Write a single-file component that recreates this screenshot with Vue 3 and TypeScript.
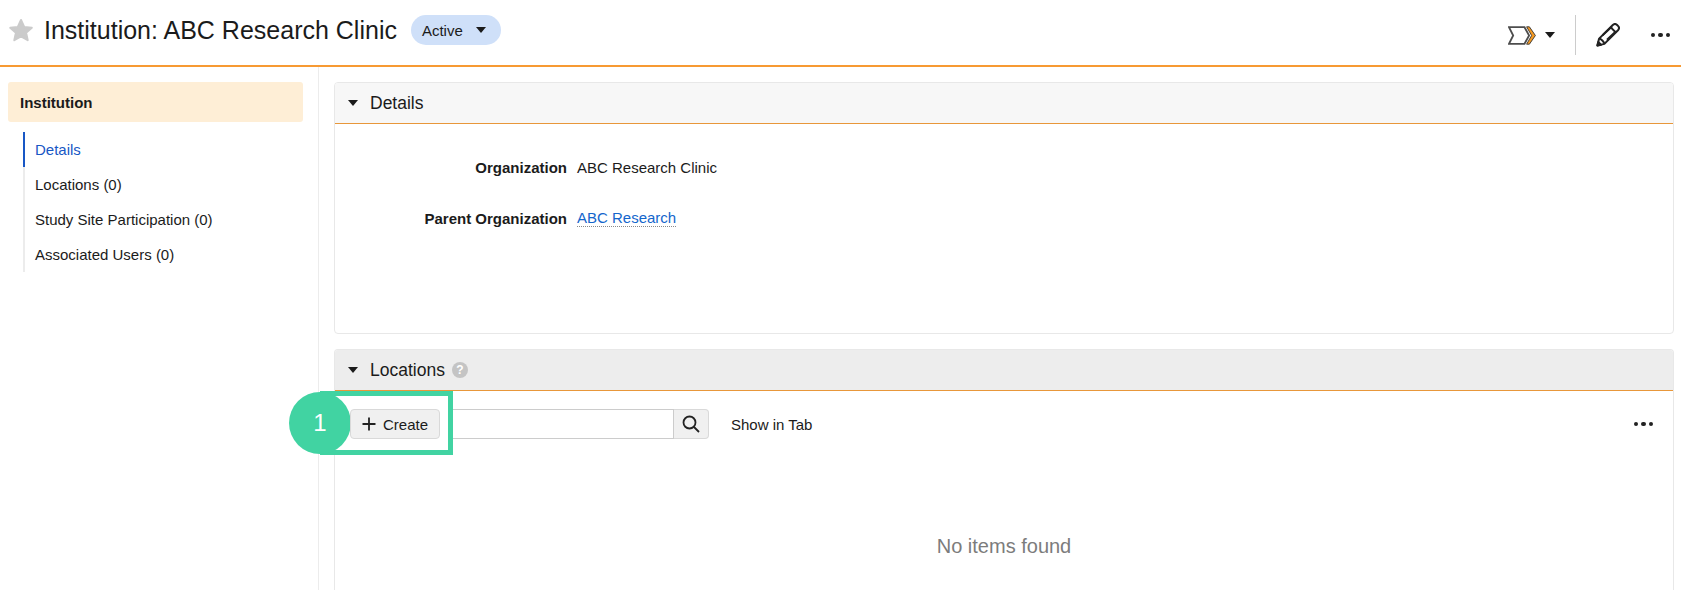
<script setup lang="ts">
const navItems: string[] = ['Locations (0)', 'Study Site Participation (0)', 'Associated Users (0)']
</script>

<template>
  <div class="page">
    <header class="top">
      <svg class="star" viewBox="0 0 26 24" width="26" height="24"><path d="M13 2l3.2 7 7.6.8-5.7 5 1.6 7.4L13 18.4l-6.7 3.8 1.6-7.4-5.7-5L9.8 9z" fill="#cbcbcb" stroke="#cbcbcb" stroke-width="2" stroke-linejoin="round" /></svg>
      <h1 class="title">Institution: ABC Research Clinic</h1>
      <div class="badge"><span>Active</span><i class="caret"></i></div>
      <div class="actions">
        <svg class="process" viewBox="0 0 28 19" width="28" height="19">
          <path d="M1 1.2h15.5l4.6 8.3-4.6 8.3H1l4.2-8.3z" fill="none" stroke="#4d4d4d" stroke-width="1.8" />
          <path d="M18.6.8h2.8l6 8.7-6 8.7h-2.8l5-8.7z" fill="#f59a23" stroke="#333" stroke-width=".9" />
        </svg>
        <i class="caret process-caret"></i>
        <span class="sep"></span>
        <svg class="pencil" viewBox="0 0 24 24" width="24" height="24" fill="none" stroke="#222" stroke-width="2" stroke-linejoin="round">
          <path d="M1.4 22.6l1.7-7L16.8 2c1.3-1.2 3.1-1.2 4.3 0l.9.9c1.2 1.2 1.2 3 0 4.3L8.4 20.9z" />
          <path d="M3.1 15.6c2 .2 4.9 3 5.3 5.3M6.6 12.2l9.4-8.6M15 4.6l4.4 4.4M11 16.8l9-8.6" />
          <path d="M1.4 22.6l.9-3.6 2.7 2.7z" fill="#222" />
        </svg>
        <div class="dots"><b></b><b></b><b></b></div>
      </div>
    </header>

    <div class="main">
      <aside class="side">
        <div class="side-head">Institution</div>
        <nav class="nav">
          <a class="nav-item active">Details</a>
          <a v-for="item in navItems" :key="item" class="nav-item">{{ item }}</a>
        </nav>
      </aside>

      <section class="content">
        <div class="panel details">
          <div class="panel-head light"><i class="caret"></i><span>Details</span></div>
          <div class="fields">
            <div class="field"><label>Organization</label><span>ABC Research Clinic</span></div>
            <div class="field"><label>Parent Organization</label><a class="link">ABC Research</a></div>
          </div>
        </div>

        <div class="panel locations">
          <div class="panel-head"><i class="caret"></i><span>Locations</span><em class="help">?</em></div>
          <div class="toolbar">
            <button class="create"><svg viewBox="0 0 14 14" width="14" height="14"><path d="M7 .5v13M.5 7h13" stroke="#222" stroke-width="1.8" /></svg>Create</button>
            <div class="search-box"></div>
            <button class="search-btn"><svg viewBox="0 0 18 18" width="18" height="18" fill="none" stroke="#222" stroke-width="1.8"><circle cx="7.5" cy="7.5" r="6" /><path d="M12 12l5 5" /></svg></button>
            <span class="show">Show in Tab</span>
            <div class="dots small"><b></b><b></b><b></b></div>
          </div>
          <div class="empty">No items found</div>

          <div class="callout-box"></div>
          <div class="callout-num">1</div>
        </div>
      </section>
    </div>
  </div>
</template>

<style>
html, body { margin: 0; background: #fff; }
</style>

<style scoped>
.page {
  width: 1681px;
  height: 590px;
  overflow: hidden;
  background: #fff;
  color: #1b1b1b;
  font-family: "Liberation Sans", Arial, sans-serif;
  font-size: 15px;
}
.top {
  height: 67px;
  box-sizing: border-box;
  border-bottom: 2px solid #f79a33;
  display: flex;
  align-items: center;
  padding: 0 11px 5px 8px;
}
.star { flex: none; }
.title {
  margin: 0 0 0 10px;
  font-size: 25px;
  font-weight: 400;
  line-height: 30px;
}
.badge {
  margin-left: 14px;
  width: 90px;
  height: 30px;
  box-sizing: border-box;
  border-radius: 15px;
  background: #cfe0f9;
  display: flex;
  align-items: center;
  padding-left: 11px;
  gap: 13px;
}
.caret {
  display: inline-block;
  flex: none;
  width: 0;
  height: 0;
  border-left: 5.5px solid transparent;
  border-right: 5.5px solid transparent;
  border-top: 6px solid #1b1b1b;
}
.actions {
  margin-left: auto;
  margin-top: 10px;
  display: flex;
  align-items: center;
}
.process-caret { margin-left: 9px; }
.sep {
  width: 1px;
  height: 40px;
  background: #ccc;
  margin: 0 20px;
}
.dots { display: flex; gap: 3px; margin-left: 31px; }
.dots b {
  width: 4.5px;
  height: 4.5px;
  border-radius: 50%;
  background: #222;
}
.main { display: flex; height: 523px; }
.side {
  width: 319px;
  box-sizing: border-box;
  flex: none;
  padding: 15px 15px 0 8px;
  border-right: 1px solid #ececec;
}
.side-head {
  height: 40px;
  line-height: 42px;
  padding-left: 12px;
  border-radius: 3px;
  background: #feeed6;
  font-weight: 700;
}
.nav {
  margin: 10px 0 0 15px;
  display: flex;
  flex-direction: column;
  border-left: 2px solid #ececec;
}
.nav-item {
  height: 35px;
  line-height: 35px;
  padding-left: 10px;
  margin-left: -2px;
  border-left: 2px solid transparent;
}
.nav-item.active { color: #1857c5; border-left-color: #1857c5; }
.content {
  flex: 1;
  min-width: 0;
  padding: 15px 7px 0 15px;
  display: flex;
  flex-direction: column;
  gap: 15px;
}
.panel {
  position: relative;
  border: 1px solid #e8e8e8;
  border-radius: 4px;
}
.details { height: 252px; box-sizing: border-box; flex: none; }
.panel-head {
  height: 40px;
  border-bottom: 1px solid #e8973a;
  background: #ededed;
  display: flex;
  align-items: center;
  padding-left: 13px;
  font-size: 17.5px;
  border-radius: 3px 3px 0 0;
}
.panel-head.light { background: #f7f7f7; }
.panel-head .caret { margin-right: 12px; }
.fields { padding-top: 18px; }
.field {
  display: flex;
  height: 51px;
  line-height: 51px;
  align-items: flex-start;
}
.field label {
  width: 232px;
  text-align: right;
  font-weight: 700;
  margin-right: 10px;
}
.link {
  color: #1466cc;
  line-height: 17px;
  margin-top: 16px;
  border-bottom: 1px dotted #8a8a8a;
}
.help {
  margin-left: 7px;
  width: 16px;
  height: 16px;
  border-radius: 50%;
  background: #c4c4c4;
  color: #fff;
  font: 700 12px/16px "Liberation Sans", Arial, sans-serif;
  text-align: center;
}
.locations { flex: 1; border-bottom: 0; border-radius: 4px 4px 0 0; }
.toolbar {
  display: flex;
  align-items: center;
  height: 30px;
  margin-top: 18px;
  padding: 0 20px 0 15px;
}
.create {
  position: relative;
  z-index: 2;
  width: 90px;
  height: 30px;
  box-sizing: border-box;
  border: 1px solid #d9d9d9;
  border-radius: 4px;
  background: #f0f0f0;
  color: #1b1b1b;
  font: 15px "Liberation Sans", Arial, sans-serif;
  display: flex;
  align-items: center;
  justify-content: center;
  gap: 7px;
  padding: 0;
}
.search-box {
  width: 234px;
  height: 30px;
  box-sizing: border-box;
  border: 1px solid #ccc;
  border-left: 0;
}
.search-btn {
  width: 35px;
  height: 30px;
  box-sizing: border-box;
  border: 1px solid #d9d9d9;
  border-left: 0;
  border-radius: 0 4px 4px 0;
  background: #f0f0f0;
  display: flex;
  align-items: center;
  justify-content: center;
  padding: 0;
}
.show { margin-left: 22px; }
.dots.small { margin-left: auto; }
.empty {
  margin-top: 96px;
  text-align: center;
  font-size: 20px;
  color: #7c7c7c;
}
.callout-box {
  position: absolute;
  z-index: 1;
  left: -15px;
  top: 41px;
  width: 133px;
  height: 64px;
  box-sizing: border-box;
  border: 5px solid #41d3a2;
  background: #fff;
}
.callout-num {
  position: absolute;
  z-index: 1;
  left: -46px;
  top: 42px;
  width: 62px;
  height: 62px;
  border-radius: 50%;
  background: #41d3a2;
  color: #fff;
  font-size: 24px;
  line-height: 62px;
  text-align: center;
}
</style>
